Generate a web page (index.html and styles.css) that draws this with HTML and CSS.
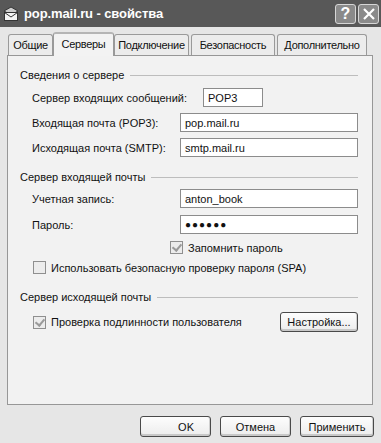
FILE: index.html
```html
<!DOCTYPE html>
<html lang="ru">
<head>
<meta charset="utf-8">
<link rel="stylesheet" href="styles.css">
</head>
<body>
<div class="window">
  <div class="titlebar">
    <svg class="appicon" width="18" height="16" viewBox="0 0 18 16">
      <path d="M2 5 L9 1 L16 5 L9 9 Z" fill="#cfcfcf" stroke="#333" stroke-width="1"/>
      <rect x="2.5" y="6.5" width="13" height="8" fill="#f4f4f4" stroke="#333"/>
      <path d="M2.5 6.5 L9 11 L15.5 6.5" fill="none" stroke="#333"/>
    </svg>
    <span class="title">pop.mail.ru - свойства</span>
    <span class="tbtn">?</span>
    <span class="tbtn">
      <svg width="14" height="14" viewBox="0 0 14 14"><path d="M2 2 L12 12 M12 2 L2 12" stroke="#fff" stroke-width="2.2"/></svg>
    </span>
  </div>
  <div class="tabs">
    <div class="tab t1">Общие</div>
    <div class="tab t2 active">Серверы</div>
    <div class="tab t3">Подключение</div>
    <div class="tab t4">Безопасность</div>
    <div class="tab t5">Дополнительно</div>
  </div>
  <div class="panel">
    <div class="group g1"><span>Сведения о сервере</span><i></i></div>
    <div class="row r1"><label>Сервер входящих сообщений:</label><div class="field small">POP3</div></div>
    <div class="row"><label>Входящая почта (POP3):</label><div class="field">pop.mail.ru</div></div>
    <div class="row"><label>Исходящая почта (SMTP):</label><div class="field">smtp.mail.ru</div></div>
    <div class="group g2"><span>Сервер входящей почты</span><i></i></div>
    <div class="row r4"><label>Учетная запись:</label><div class="field">anton_book</div></div>
    <div class="row r5"><label>Пароль:</label><div class="field pw">●●●●●●</div></div>
    <div class="check c1"><span class="box on"></span>Запомнить пароль</div>
    <div class="check c2"><span class="box"></span>Использовать безопасную проверку пароля (SPA)</div>
    <div class="group g3"><span>Сервер исходящей почты</span><i></i></div>
    <div class="authrow">
      <div class="check"><span class="box on"></span>Проверка подлинности пользователя</div>
      <div class="btn setup">Настройка...</div>
    </div>
  </div>
  <div class="footer">
    <div class="btn ok">OK</div>
    <div class="btn">Отмена</div>
    <div class="btn apply">Применить</div>
  </div>
</div>
</body>
</html>
```
FILE: styles.css
```css
* { box-sizing: border-box; }
html, body { margin: 0; padding: 0; }
body { background: #e4e4e4; font-family: "Liberation Sans", Arial, sans-serif; font-size: 11px; color: #111; }
.window { width: 381px; height: 443px; background: #e6e6e6; overflow: hidden; }
.titlebar { height: 27px; background: #585858; display: flex; align-items: center; padding: 0 2px 0 2px; }
.appicon { margin-right: 4px; }
.title { color: #fff; font-weight: bold; font-size: 13px; flex: 1; letter-spacing: -0.1px; }
.tbtn { width: 21px; height: 20px; border: 1px solid #d6d6d6; border-radius: 3px; background: #8a8a8a; color: #fff; font-weight: bold; font-size: 16px; display: flex; align-items: center; justify-content: center; margin-left: 2px; }
.tabs { display: flex; align-items: flex-end; height: 28px; padding-left: 8px; }
.tab { height: 21px; border: 1px solid #9a9a9a; border-bottom: none; border-radius: 3px 3px 0 0; background: #ececec; padding-top: 4px; margin-right: 2px; white-space: nowrap; position: relative; display: flex; justify-content: center; letter-spacing: -0.3px; flex: none; }
.tab.active { height: 24px; background: #f3f3f3; margin: 0 0 0 -2px; top: 1px; z-index: 2; border-top: 2px solid #b5b5b5; }
.t1 { width: 45px; }
.t2 { width: 61px; }
.t3 { width: 75px; }
.t4 { width: 84px; }
.t5 { width: 90px; }
.panel { margin: 0 8px 0 7px; height: 350px; background: #f2f2f2; border: 1px solid #979797; padding: 0 14px 0 12px; }
.group { display: flex; align-items: center; height: 14px; }
.group i { flex: 1; height: 1px; background: #bdbdbd; margin-left: 6px; }
.g1 { margin-top: 12px; }
.g2 { margin-top: 13px; }
.g3 { margin-top: 16px; }
.row { display: flex; align-items: center; height: 19px; margin-top: 6px; padding-left: 12px; }
.row label { width: 148px; flex: none; }
.r1 label { width: 171px; }
.r4 { margin-top: 5px; }
.r5 { margin-top: 7px; }
.field { flex: 1; height: 19px; border: 1px solid #8c8c8c; background: #fff; padding: 3px 4px 0 4px; }
.field.small { flex: none; width: 60px; }
.field.pw { font-size: 10px; letter-spacing: 1px; padding-top: 3px; }
.check { display: flex; align-items: center; height: 13px; }
.c1 { margin-top: 7px; padding-left: 150px; }
.c2 { margin-top: 7px; padding-left: 13px; }
.box { width: 13px; height: 13px; border: 1px solid #8f8f8f; background: #ececec; margin-right: 5px; position: relative; flex: none; }
.box.on::after { content: ""; position: absolute; left: 3px; top: 0px; width: 4px; height: 7px; border: solid #9a9a9a; border-width: 0 2px 2px 0; transform: rotate(40deg); }
.authrow { display: flex; align-items: center; justify-content: space-between; margin-top: 8px; padding-left: 13px; height: 20px; }
.btn { height: 21px; border: 1px solid #4a4a4a; border-radius: 3px; background: linear-gradient(#fdfdfd, #ececec); box-shadow: inset 0 -2px 0 #c8c8c8, inset -1px 0 0 #d0d0d0; display: flex; align-items: center; justify-content: center; }
.setup { width: 78px; height: 20px; }
.footer { display: flex; justify-content: flex-end; gap: 9px; padding: 11px 7px 0 0; }
.footer .btn { width: 71px; }
.footer .ok { justify-content: flex-end; padding-right: 16px; }
.footer .apply { width: 74px; }
```
